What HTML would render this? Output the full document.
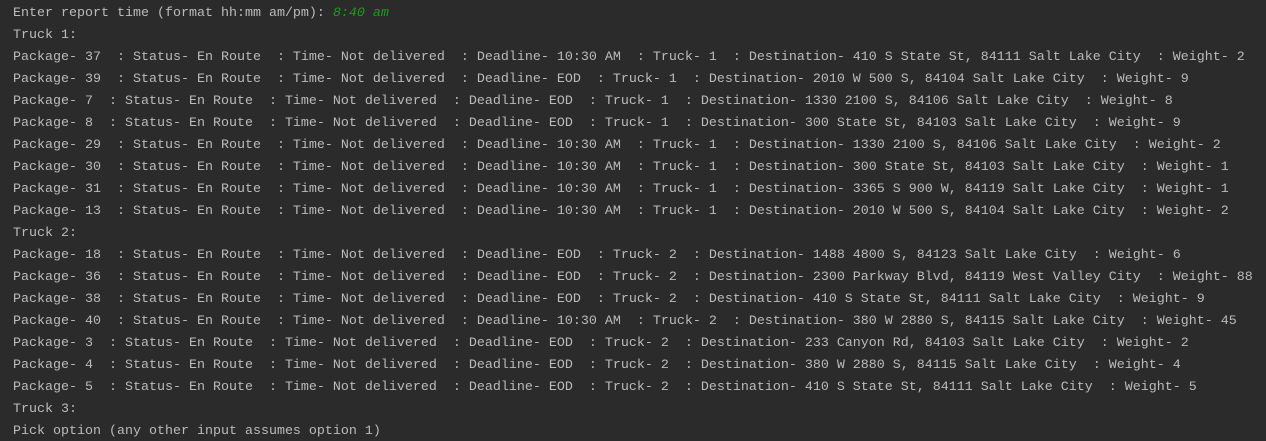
<!DOCTYPE html>
<html><head><style>
html,body{margin:0;padding:0;background:#2b2b2b;width:1266px;height:441px;overflow:hidden}
pre{margin:0;padding:3px 0 0 13px;font-family:"Liberation Mono",monospace;font-size:13.33px;line-height:22px;color:#bbbbbb}
i{color:#1f9a1f}
</style></head><body><pre>Enter report time (format hh:mm am/pm): <i>8:40 am</i>
Truck 1:
Package- 37  : Status- En Route  : Time- Not delivered  : Deadline- 10:30 AM  : Truck- 1  : Destination- 410 S State St, 84111 Salt Lake City  : Weight- 2
Package- 39  : Status- En Route  : Time- Not delivered  : Deadline- EOD  : Truck- 1  : Destination- 2010 W 500 S, 84104 Salt Lake City  : Weight- 9
Package- 7  : Status- En Route  : Time- Not delivered  : Deadline- EOD  : Truck- 1  : Destination- 1330 2100 S, 84106 Salt Lake City  : Weight- 8
Package- 8  : Status- En Route  : Time- Not delivered  : Deadline- EOD  : Truck- 1  : Destination- 300 State St, 84103 Salt Lake City  : Weight- 9
Package- 29  : Status- En Route  : Time- Not delivered  : Deadline- 10:30 AM  : Truck- 1  : Destination- 1330 2100 S, 84106 Salt Lake City  : Weight- 2
Package- 30  : Status- En Route  : Time- Not delivered  : Deadline- 10:30 AM  : Truck- 1  : Destination- 300 State St, 84103 Salt Lake City  : Weight- 1
Package- 31  : Status- En Route  : Time- Not delivered  : Deadline- 10:30 AM  : Truck- 1  : Destination- 3365 S 900 W, 84119 Salt Lake City  : Weight- 1
Package- 13  : Status- En Route  : Time- Not delivered  : Deadline- 10:30 AM  : Truck- 1  : Destination- 2010 W 500 S, 84104 Salt Lake City  : Weight- 2
Truck 2:
Package- 18  : Status- En Route  : Time- Not delivered  : Deadline- EOD  : Truck- 2  : Destination- 1488 4800 S, 84123 Salt Lake City  : Weight- 6
Package- 36  : Status- En Route  : Time- Not delivered  : Deadline- EOD  : Truck- 2  : Destination- 2300 Parkway Blvd, 84119 West Valley City  : Weight- 88
Package- 38  : Status- En Route  : Time- Not delivered  : Deadline- EOD  : Truck- 2  : Destination- 410 S State St, 84111 Salt Lake City  : Weight- 9
Package- 40  : Status- En Route  : Time- Not delivered  : Deadline- 10:30 AM  : Truck- 2  : Destination- 380 W 2880 S, 84115 Salt Lake City  : Weight- 45
Package- 3  : Status- En Route  : Time- Not delivered  : Deadline- EOD  : Truck- 2  : Destination- 233 Canyon Rd, 84103 Salt Lake City  : Weight- 2
Package- 4  : Status- En Route  : Time- Not delivered  : Deadline- EOD  : Truck- 2  : Destination- 380 W 2880 S, 84115 Salt Lake City  : Weight- 4
Package- 5  : Status- En Route  : Time- Not delivered  : Deadline- EOD  : Truck- 2  : Destination- 410 S State St, 84111 Salt Lake City  : Weight- 5
Truck 3:
Pick option (any other input assumes option 1)</pre></body></html>
